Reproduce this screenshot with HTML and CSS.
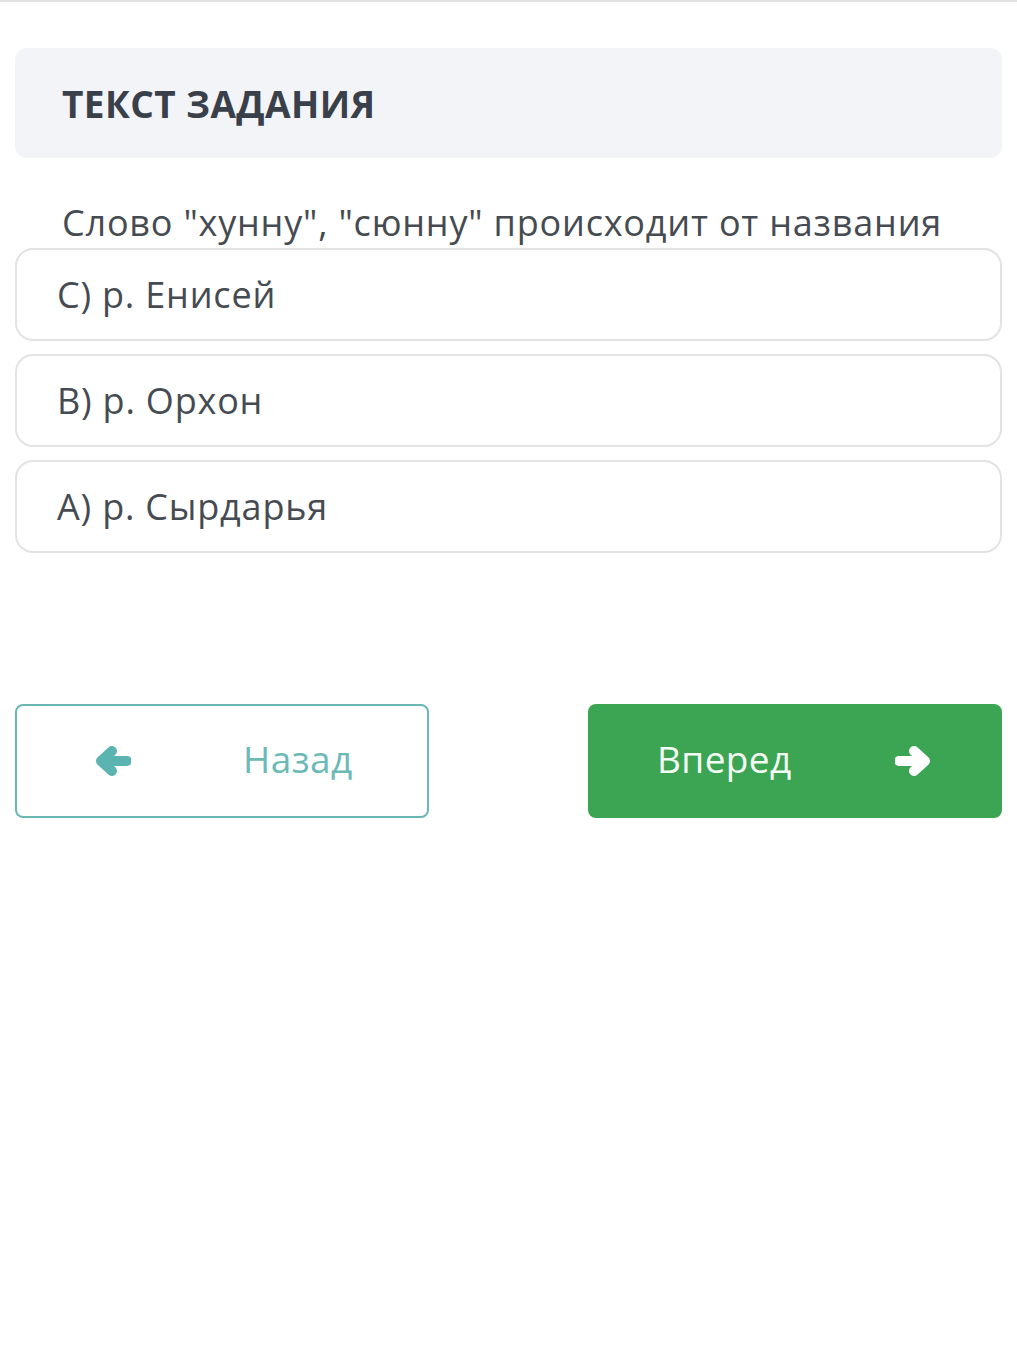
FILE: index.html
```html
<!DOCTYPE html>
<html lang="ru">
<head>
  <meta charset="UTF-8" />
  <meta name="viewport" content="width=device-width, initial-scale=1.0"/>
  <title>Тест</title>
  <link rel="stylesheet" href="styles.css">
</head>
<body>
  <div class="top-line"></div>
  <div class="container">
    <div class="task-header">ТЕКСТ ЗАДАНИЯ</div>

    <div class="question">Слово "хунну", "сюнну" происходит от названия</div>

    <div class="answers">
      <div class="answer">C) р. Енисей</div>
      <div class="answer">B) р. Орхон</div>
      <div class="answer">A) р. Сырдарья</div>
    </div>

    <div class="nav">
      <button class="btn btn-back">
        <svg class="arrow" viewBox="0 0 36 34"><path d="M32 17H8M17 7L6 17L17 27"/></svg>
        <span>Назад</span>
      </button>
      <button class="btn btn-next">
        <span>Вперед</span>
        <svg class="arrow" viewBox="0 0 36 34"><path d="M4 17H28M19 7L30 17L19 27"/></svg>
      </button>
    </div>
  </div>
</body>
</html>
```

FILE: styles.css
```css
body {
  margin: 0;
  font-family: 'Open Sans', 'Noto Sans', sans-serif;
  background: #fff;
  color: #40454b;
}

.top-line {
  height: 2px;
  background: #e2e2e2;
}

.container {
  padding: 46px 15px 0;
}

.task-header {
  background: #f3f4f8;
  border-radius: 12px;
  height: 110px;
  padding-left: 47px;
  display: flex;
  align-items: center;
  font-size: 37px;
  font-weight: bold;
  letter-spacing: 0.4px;
  color: #3a4049;
}

.question {
  padding-left: 47px;
  margin-top: 40px;
  font-size: 36px;
  line-height: 50px;
  letter-spacing: 0.8px;
  color: #464b51;
}

.answers {
  display: flex;
  flex-direction: column;
  gap: 13px;
}

.answer {
  height: 89px;
  border: 2px solid #e3e3e3;
  border-radius: 18px;
  padding-left: 40px;
  display: flex;
  align-items: center;
  font-size: 36px;
  letter-spacing: 0.8px;
  color: #464b51;
}

.nav {
  display: flex;
  justify-content: space-between;
  margin-top: 151px;
}

.btn {
  width: 414px;
  height: 114px;
  border-radius: 8px;
  font-family: 'Open Sans', 'Noto Sans', sans-serif;
  font-size: 37px;
  letter-spacing: 0.4px;
  display: flex;
  align-items: center;
  cursor: pointer;
  padding: 0;
}

.btn span {
  margin-bottom: 6px;
}

.btn .arrow {
  width: 36px;
  height: 34px;
  fill: none;
  stroke-width: 10;
  stroke-linecap: round;
  stroke-linejoin: round;
}

.btn-back {
  background: #fff;
  border: 2px solid #6ab7b3;
  color: #6bbab6;
}

.btn-back .arrow {
  stroke: #5cb4b0;
  margin-left: 78px;
  margin-right: 112px;
}

.btn-next {
  background: #3ba553;
  border: none;
  color: #f4fbf5;
}

.btn-next span {
  margin-left: 69px;
}

.btn-next .arrow {
  stroke: #fff;
  margin-left: auto;
  margin-right: 71px;
}
```
